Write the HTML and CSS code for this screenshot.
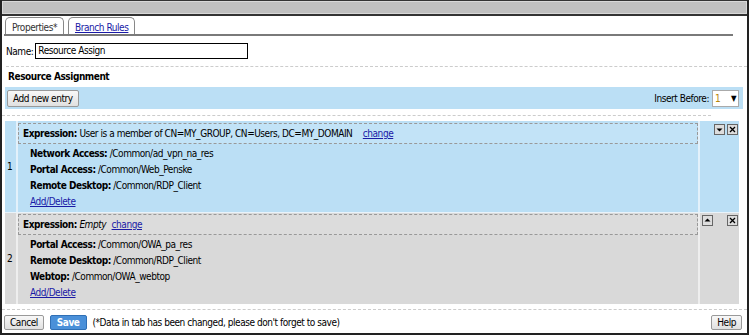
FILE: index.html
```html
<!DOCTYPE html>
<html>
<head>
<meta charset="utf-8">
<link rel="stylesheet" href="styles.css">
</head>
<body>
<div class="window">
  <div class="titlebar"></div>
  <div class="tabs">
    <div class="tab active">Properties*</div>
    <div class="tab"><a href="#">Branch Rules</a></div>
  </div>
  <div class="tabline"></div>
  <div class="name-row">
    <label>Name:</label>
    <div class="input">Resource Assign</div>
  </div>
  <div class="sep"></div>
  <div class="section-title">Resource Assignment</div>
  <div class="toolbar">
    <button class="btn">Add new entry</button>
    <div class="insert">Insert Before: <span class="select"><span class="num">1</span><span class="arrow">&#9660;</span></span></div>
  </div>
  <div class="sep sep2"></div>
  <div class="entries">
    <div class="entry blue">
      <div class="idx">1</div>
      <div class="content">
        <div class="expr"><b>Expression:</b> User is a member of CN=MY_GROUP, CN=Users, DC=MY_DOMAIN <a href="#" class="chg">change</a></div>
        <div class="items">
          <div><b>Network Access:</b> /Common/ad_vpn_na_res</div>
          <div><b>Portal Access:</b> /Common/Web_Penske</div>
          <div><b>Remote Desktop:</b> /Common/RDP_Client</div>
          <div><a href="#">Add/Delete</a></div>
        </div>
      </div>
      <div class="ctrls">
        <span class="ib"><svg width="9" height="9" viewBox="0 0 9 9"><path d="M1.5 3.5h6L4.5 6.5z" fill="#000"/></svg></span><span class="ib"><svg width="9" height="9" viewBox="0 0 9 9"><path d="M2 2l5 5M7 2l-5 5" stroke="#000" stroke-width="1.3"/></svg></span>
      </div>
    </div>
    <div class="entry gray">
      <div class="idx">2</div>
      <div class="content">
        <div class="expr"><b>Expression:</b> <i>Empty</i> <a href="#" class="chg">change</a></div>
        <div class="items">
          <div><b>Portal Access:</b> /Common/OWA_pa_res</div>
          <div><b>Remote Desktop:</b> /Common/RDP_Client</div>
          <div><b>Webtop:</b> /Common/OWA_webtop</div>
          <div><a href="#">Add/Delete</a></div>
        </div>
      </div>
      <div class="ctrls spread">
        <span class="ib"><svg width="9" height="9" viewBox="0 0 9 9"><path d="M1.5 5.5h6L4.5 2.5z" fill="#000"/></svg></span><span class="ib"><svg width="9" height="9" viewBox="0 0 9 9"><path d="M2 2l5 5M7 2l-5 5" stroke="#000" stroke-width="1.3"/></svg></span>
      </div>
    </div>
  </div>
  <div class="sep sep3"></div>
  <div class="footer">
    <button class="btn small">Cancel</button>
    <button class="btn small save">Save</button>
    <span class="note">(*Data in tab has been changed, please don't forget to save)</span>
    <button class="btn small help">Help</button>
  </div>
</div>
</body>
</html>
```
FILE: styles.css
```css
html, body { margin: 0; padding: 0; background: #fff; }
body { font-family: "DejaVu Sans Condensed", "DejaVu Sans", sans-serif; font-size: 10px; letter-spacing: -0.45px; color: #000; }
.window {
  width: 749px; height: 335px; box-sizing: border-box;
  border-left: 2px solid #222; border-right: 2px solid #222; border-bottom: 2px solid #222;
  display: flex; flex-direction: column; overflow: hidden;
}
.titlebar { height: 13px; background: #c0c0c0; border-top: 1px solid #333; border-bottom: 2px solid #333; box-shadow: inset 0 0 0 1px #d8d8d8; flex: none; }
.tabs { display: flex; gap: 4px; padding: 1px 0 0 3px; height: 18px; flex: none; box-sizing: border-box; }
.tab { border: 1px solid #888; border-bottom: none; border-radius: 5px 5px 0 0; padding: 3px 6px 0 6px; background: #fff; line-height: 13px; }
.tab.active { color: #333; }
.tab a { color: #1a1aa6; }
.tabline { height: 2px; background: #7a7a7a; margin: 0 14px 0 2px; flex: none; }
.name-row { display: flex; align-items: center; gap: 2px; padding: 7px 0 0 4px; flex: none; }
.input { width: 207px; height: 14px; border: 1px solid #000; padding: 0 2px; line-height: 14px; }
.sep { border-top: 1px dashed #ccc; margin: 7px 0 0 4px; height: 0; flex: none; }
.section-title { font-weight: bold; padding: 3px 0 0 6px; height: 13px; line-height: 13px; flex: none; }
.toolbar { background: #bbdff5; margin: 4px 4px 0 3px; height: 22px; display: flex; align-items: center; justify-content: space-between; padding: 0 4px 0 2px; flex: none; }
.btn { font: inherit; letter-spacing: inherit; background: linear-gradient(#f8f8f8, #e0e0e0); border: 1px solid #999; border-radius: 2px; padding: 0 5px; height: 17px; line-height: 15px; color: #000; }
.btn.small { height: 15px; line-height: 13px; }
.insert { display: flex; align-items: center; gap: 3px; }
.select { display: inline-flex; align-items: center; justify-content: space-between; width: 21px; height: 15px; border: 1px solid #aaa; background: #fff; padding: 0 2px; }
.num { color: #b8860b; }
.arrow { font-size: 8px; }
.sep2 { margin: 6px 36px 0 0; }
.entries { margin: 5px 8px 0 3px; display: flex; flex-direction: column; gap: 1px; background: #e9f3fa; flex: none; }
.entry { display: grid; grid-template-columns: 11px 1fr 39px; column-gap: 2px; }
.entry.blue .idx, .entry.blue .content, .entry.blue .ctrls { background: #bbdff5; }
.entry.gray .idx, .entry.gray .content, .entry.gray .ctrls { background: #d9d9d9; }
.entry.blue { background: #e3f1fb; }
.entry.gray { background: #eeeeee; }
.idx { display: flex; align-items: center; padding-left: 2px; }
.content { padding: 2px 0 2px 0; }
.gray .content { padding-top: 1px; padding-bottom: 3px; }
.expr { border: 1px dashed #999; padding: 0 4px; height: 19px; line-height: 19px; }
.blue .expr { background: #c2e3f7; }
.gray .expr { background: #dcdcdc; }
.chg { margin-left: 8px; color: #1a1aa6; }
.gray .chg { margin-left: 3px; }
.items { padding: 2px 0 0 12px; line-height: 16px; }
.gray .items { padding-top: 2px; }
.items a { color: #1a1aa6; }
.ctrls { display: flex; align-items: flex-start; gap: 2px; padding: 3px 0 0 14px; }
.ctrls.spread { gap: 14px; padding-left: 2px; padding-top: 2px; }
.ib { width: 9px; height: 9px; border: 1px solid #666; background: #ddd; display: inline-flex; }
.sep3 { margin: 5px 0 0 0; }
.footer { display: flex; align-items: center; padding: 5px 5px 0 2px; gap: 6px; flex: none; }
.save { background: #4a90d9; color: #fff; font-weight: bold; border-color: #2f6fb5; padding: 0 6px; }
.help { margin-left: auto; }
```
